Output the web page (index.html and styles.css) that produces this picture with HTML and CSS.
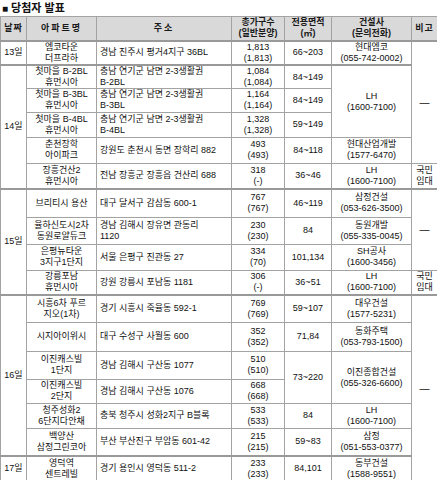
FILE: index.html
```html
<!DOCTYPE html>
<html lang="ko">
<head>
<meta charset="utf-8">
<title>당첨자 발표</title>
<link rel="stylesheet" href="styles.css">
</head>
<body>
<div class="title"><span class="sq">■</span> 당첨자 발표</div>
<table class="t">
<colgroup>
<col class="c-date"><col class="c-name"><col class="c-addr"><col class="c-num"><col class="c-area"><col class="c-co"><col class="c-note">
</colgroup>
<thead>
<tr class="h">
<th class="sp1">날짜</th><th class="sp2">아파트명</th><th class="sp2">주소</th><th>총가구수<br>(일반분양)</th><th>전용면적<br>(㎡)</th><th>건설사<br>(문의전화)</th><th class="sp1">비고</th>
</tr>
</thead>
<tbody>
<tr class="g r24"><td>13일</td><td>엠코타운<br>더프라하</td><td class="a">경남 진주시 평거4지구 36BL</td><td>1,813<br>(1,813)</td><td>66~203</td><td>현대엠코<br>(055-742-0002)</td><td rowspan="5" class="dash">—</td></tr>
<tr class="g r23"><td rowspan="5">14일</td><td>첫마을 B-2BL<br>휴먼시아</td><td class="a">충남 연기군 남면 2-3생활권<br>B-2BL</td><td>1,084<br>(1,084)</td><td>84~149</td><td rowspan="3">LH<br>(1600-7100)</td></tr>
<tr class="r23"><td>첫마을 B-3BL<br>휴먼시아</td><td class="a">충남 연기군 남면 2-3생활권<br>B-3BL</td><td>1,164<br>(1,164)</td><td>84~149</td></tr>
<tr class="r25"><td>첫마을 B-4BL<br>휴먼시아</td><td class="a">충남 연기군 남면 2-3생활권<br>B-4BL</td><td>1,328<br>(1,328)</td><td>59~149</td></tr>
<tr class="r25"><td>춘천장학<br>아이파크</td><td class="a">강원도 춘천시 동면 장학리 882</td><td>493<br>(493)</td><td>84~118</td><td>현대산업개발<br>(1577-6470)</td></tr>
<tr class="r25"><td>장흥건산2<br>휴먼시아</td><td class="a">전남 장흥군 장흥읍 건산리 688</td><td>318<br>(-)</td><td>36~46</td><td>LH<br>(1600-7100)</td><td>국민<br>임대</td></tr>
<tr class="g r28"><td rowspan="4">15일</td><td>브리티시 용산</td><td class="a">대구 달서구 감삼동 600-1</td><td>767<br>(767)</td><td>46~119</td><td>삼정건설<br>(053-626-3500)</td><td rowspan="3" class="dash">—</td></tr>
<tr class="r27"><td>율하신도시2차<br>동원로얄듀크</td><td class="a">경남 김해시 장유면 관동리<br>1120</td><td>230<br>(230)</td><td>84</td><td>동원개발<br>(055-335-0045)</td></tr>
<tr class="r25"><td>은평뉴타운<br>3지구1단지</td><td class="a">서울 은평구 진관동 27</td><td>334<br>(70)</td><td>101,134</td><td>SH공사<br>(1600-3456)</td></tr>
<tr class="r24"><td>강릉포남<br>휴먼시아</td><td class="a">강원 강릉시 포남동 1181</td><td>306<br>(-)</td><td>36~51</td><td>LH<br>(1600-7100)</td><td>국민<br>임대</td></tr>
<tr class="g r27"><td rowspan="6">16일</td><td>시흥6차 푸르<br>지오(1차)</td><td class="a">경기 시흥시 죽율동 592-1</td><td>769<br>(769)</td><td>59~107</td><td>대우건설<br>(1577-5231)</td><td rowspan="7" class="dash">—</td></tr>
<tr class="r29"><td>시지아이위시</td><td class="a">대구 수성구 사월동 600</td><td>352<br>(352)</td><td>71,84</td><td>동화주택<br>(053-793-1500)</td></tr>
<tr class="r27"><td>이진캐스빌<br>1단지</td><td class="a">경남 김해시 구산동 1077</td><td>510<br>(510)</td><td rowspan="2">73~220</td><td rowspan="2">이진종합건설<br>(055-326-6600)</td></tr>
<tr class="r24"><td>이진캐스빌<br>2단지</td><td class="a">경남 김해시 구산동 1076</td><td>668<br>(668)</td></tr>
<tr class="r24"><td>청주성화2<br>6단지다안채</td><td class="a">충북 청주시 성화2지구 B블록</td><td>533<br>(533)</td><td>84</td><td>LH<br>(1600-7100)</td></tr>
<tr class="r27"><td>백양산<br>삼정그린코아</td><td class="a">부산 부산진구 부암동 601-42</td><td>215<br>(215)</td><td>59~83</td><td>삼정<br>(051-553-0377)</td></tr>
<tr class="g r25"><td>17일</td><td>영덕역<br>센트레빌</td><td class="a">경기 용인시 영덕동 511-2</td><td>233<br>(233)</td><td>84,101</td><td>동부건설<br>(1588-9551)</td></tr>
</tbody>
</table>
</body>
</html>
```
FILE: styles.css
```css
body {
  margin: 0;
  font-family: "Liberation Sans", "Noto Sans CJK KR", sans-serif;
  color: #111;
  background: #fff;
}
.title {
  height: 16px;
  line-height: 17px;
  font-size: 11px;
  font-weight: bold;
  padding-left: 2px;
  color: #111;
}
.title .sq {
  font-size: 10px;
}
.t {
  border-collapse: collapse;
  table-layout: fixed;
  width: 437px;
  font-size: 9px;
  line-height: 11px;
}
.c-date { width: 26px; }
.c-name { width: 70px; }
.c-addr { width: 135px; }
.c-num { width: 53px; }
.c-area { width: 47px; }
.c-co { width: 80px; }
.c-note { width: 26px; }
.t th,
.t td {
  border: 1px solid #a3a3a3;
  padding: 0;
  text-align: center;
  vertical-align: middle;
  white-space: nowrap;
  overflow: hidden;
}
.t th {
  background: #d9d9d9;
  font-weight: bold;
  color: #1a1a1a;
  border-bottom: 2px solid #999;
}
.t .h { height: 24px; }
.t th.sp1 { letter-spacing: 1px; }
.t th.sp2 { letter-spacing: 2px; }
.t td.a {
  text-align: left;
  padding-left: 3px;
}
.t tr.g > td { border-top: 2px solid #999; }
.t td.dash { font-size: 10px; }
.r23 { height: 23.5px; }
.r24 { height: 24.5px; }
.r25 { height: 25.5px; }
.r27 { height: 27.5px; }
.r28 { height: 28.5px; }
.r29 { height: 29.5px; }
```
